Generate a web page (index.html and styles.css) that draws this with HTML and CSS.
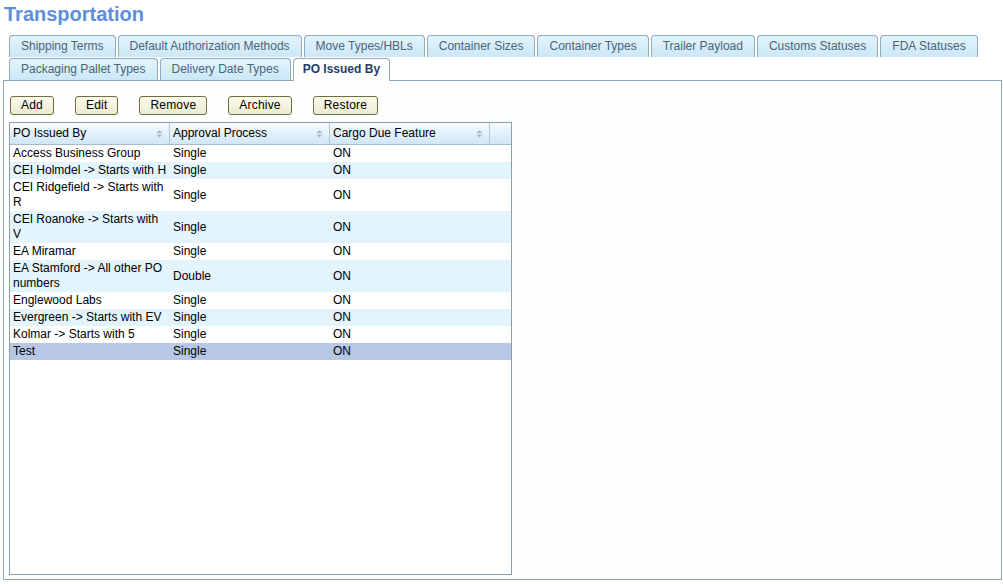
FILE: index.html
```html
<!DOCTYPE html>
<html>
<head>
<meta charset="utf-8">
<title>Transportation</title>
<link rel="stylesheet" href="styles.css">
</head>
<body>
<h1 class="title">Transportation</h1>
<div class="tabs">
  <div class="tab-row">
    <div class="tab">Shipping Terms</div>
    <div class="tab">Default Authorization Methods</div>
    <div class="tab">Move Types/HBLs</div>
    <div class="tab">Container Sizes</div>
    <div class="tab">Container Types</div>
    <div class="tab">Trailer Payload</div>
    <div class="tab">Customs Statuses</div>
    <div class="tab">FDA Statuses</div>
  </div>
  <div class="tab-row">
    <div class="tab">Packaging Pallet Types</div>
    <div class="tab">Delivery Date Types</div>
    <div class="tab active">PO Issued By</div>
  </div>
</div>
<div class="panel">
  <div class="toolbar">
    <button class="btn">Add</button>
    <button class="btn">Edit</button>
    <button class="btn">Remove</button>
    <button class="btn">Archive</button>
    <button class="btn">Restore</button>
  </div>
  <div class="grid">
    <div class="grid-head">
      <div class="hcell"><span>PO Issued By</span><svg class="sort" width="7" height="9" viewBox="0 0 7 9"><path d="M0.5 4L3.5 1L6.5 4Z M0.5 5.5L3.5 8.5L6.5 5.5Z"/></svg></div>
      <div class="hcell"><span>Approval Process</span><svg class="sort" width="7" height="9" viewBox="0 0 7 9"><path d="M0.5 4L3.5 1L6.5 4Z M0.5 5.5L3.5 8.5L6.5 5.5Z"/></svg></div>
      <div class="hcell"><span>Cargo Due Feature</span><svg class="sort" width="7" height="9" viewBox="0 0 7 9"><path d="M0.5 4L3.5 1L6.5 4Z M0.5 5.5L3.5 8.5L6.5 5.5Z"/></svg></div>
      <div class="hcell filler"></div>
    </div>
    <table class="grid-body">
      <colgroup><col class="c1"><col class="c2"><col class="c3"></colgroup>
      <tbody>
        <tr><td>Access Business Group</td><td>Single</td><td>ON</td></tr>
        <tr><td>CEI Holmdel -&gt; Starts with H</td><td>Single</td><td>ON</td></tr>
        <tr><td>CEI Ridgefield -&gt; Starts with<br>R</td><td>Single</td><td>ON</td></tr>
        <tr><td>CEI Roanoke -&gt; Starts with<br>V</td><td>Single</td><td>ON</td></tr>
        <tr><td>EA Miramar</td><td>Single</td><td>ON</td></tr>
        <tr><td>EA Stamford -&gt; All other PO<br>numbers</td><td>Double</td><td>ON</td></tr>
        <tr><td>Englewood Labs</td><td>Single</td><td>ON</td></tr>
        <tr><td>Evergreen -&gt; Starts with EV</td><td>Single</td><td>ON</td></tr>
        <tr><td>Kolmar -&gt; Starts with 5</td><td>Single</td><td>ON</td></tr>
        <tr class="selected"><td>Test</td><td>Single</td><td>ON</td></tr>
      </tbody>
    </table>
  </div>
</div>
</body>
</html>
```
FILE: styles.css
```css
body {
  margin: 0;
  font: 12px "Liberation Sans", Arial, sans-serif;
  color: #000;
  background: #fff;
}

.title {
  margin: 0;
  height: 35px;
  box-sizing: border-box;
  padding: 1px 0 0 4px;
  font-size: 20px;
  line-height: 26px;
  font-weight: bold;
  color: #5d8edb;
}

.tabs {
  padding-left: 9px;
}

.tab-row {
  display: flex;
  align-items: flex-start;
  gap: 2px;
}

.tab-row + .tab-row {
  margin-top: 1px;
}

.tab {
  height: 22px;
  box-sizing: border-box;
  padding: 0 11px;
  line-height: 21px;
  border: 1px solid #93aabb;
  border-bottom: none;
  border-radius: 4px 4px 0 0;
  background: linear-gradient(#e3f4fd, #cbe7f6);
  color: #4b6478;
  white-space: nowrap;
}

.tab.active {
  height: 23px;
  margin-bottom: -1px;
  padding: 0 9px;
  position: relative;
  z-index: 1;
  background: #fff;
  font-weight: bold;
  color: #1f3e66;
}

.panel {
  margin: 0 1px 0 3px;
  height: 500px;
  box-sizing: border-box;
  border: 1px solid #8fa6b8;
  padding: 15px 0 0 5px;
  background: #fefefe;
}

.toolbar {
  display: flex;
  gap: 21px;
  padding-left: 1px;
}

.btn {
  height: 19px;
  box-sizing: border-box;
  padding: 0 10px;
  border: 1px solid #6e6e40;
  border-radius: 3px;
  background: linear-gradient(#fbfbee, #ebebd2);
  font: 12px "Liberation Sans", Arial, sans-serif;
  letter-spacing: 0.2px;
  line-height: 17px;
  color: #000;
}

.grid {
  margin-top: 7px;
  width: 503px;
  height: 453px;
  box-sizing: border-box;
  border: 1px solid #8d9eab;
  background: #fff;
}

.grid-head {
  display: flex;
  height: 22px;
  box-sizing: border-box;
  border-bottom: 1px solid #a4bccc;
  background: linear-gradient(#f6fbfe, #cfe6f5);
}

.hcell {
  width: 160px;
  flex: none;
  box-sizing: border-box;
  border-right: 1px solid #b2c6d4;
  padding: 0 6px 0 3px;
  display: flex;
  align-items: center;
  justify-content: space-between;
  line-height: 21px;
  white-space: nowrap;
}

.hcell.filler {
  width: 21px;
  border-right: none;
}

.sort {
  fill: #aab6c0;
}

.grid-body {
  width: 501px;
  border-collapse: collapse;
  table-layout: fixed;
}

.grid-body .c1,
.grid-body .c2 {
  width: 160px;
}

.grid-body .c3 {
  width: 181px;
}

.grid-body td {
  padding: 1px 2px 1px 3px;
  line-height: 15px;
  vertical-align: middle;
  white-space: nowrap;
}

.grid-body tr:nth-child(even) td {
  background: #e4f4fc;
}

.grid-body tr.selected td {
  background: #b7c7e6;
}
```
